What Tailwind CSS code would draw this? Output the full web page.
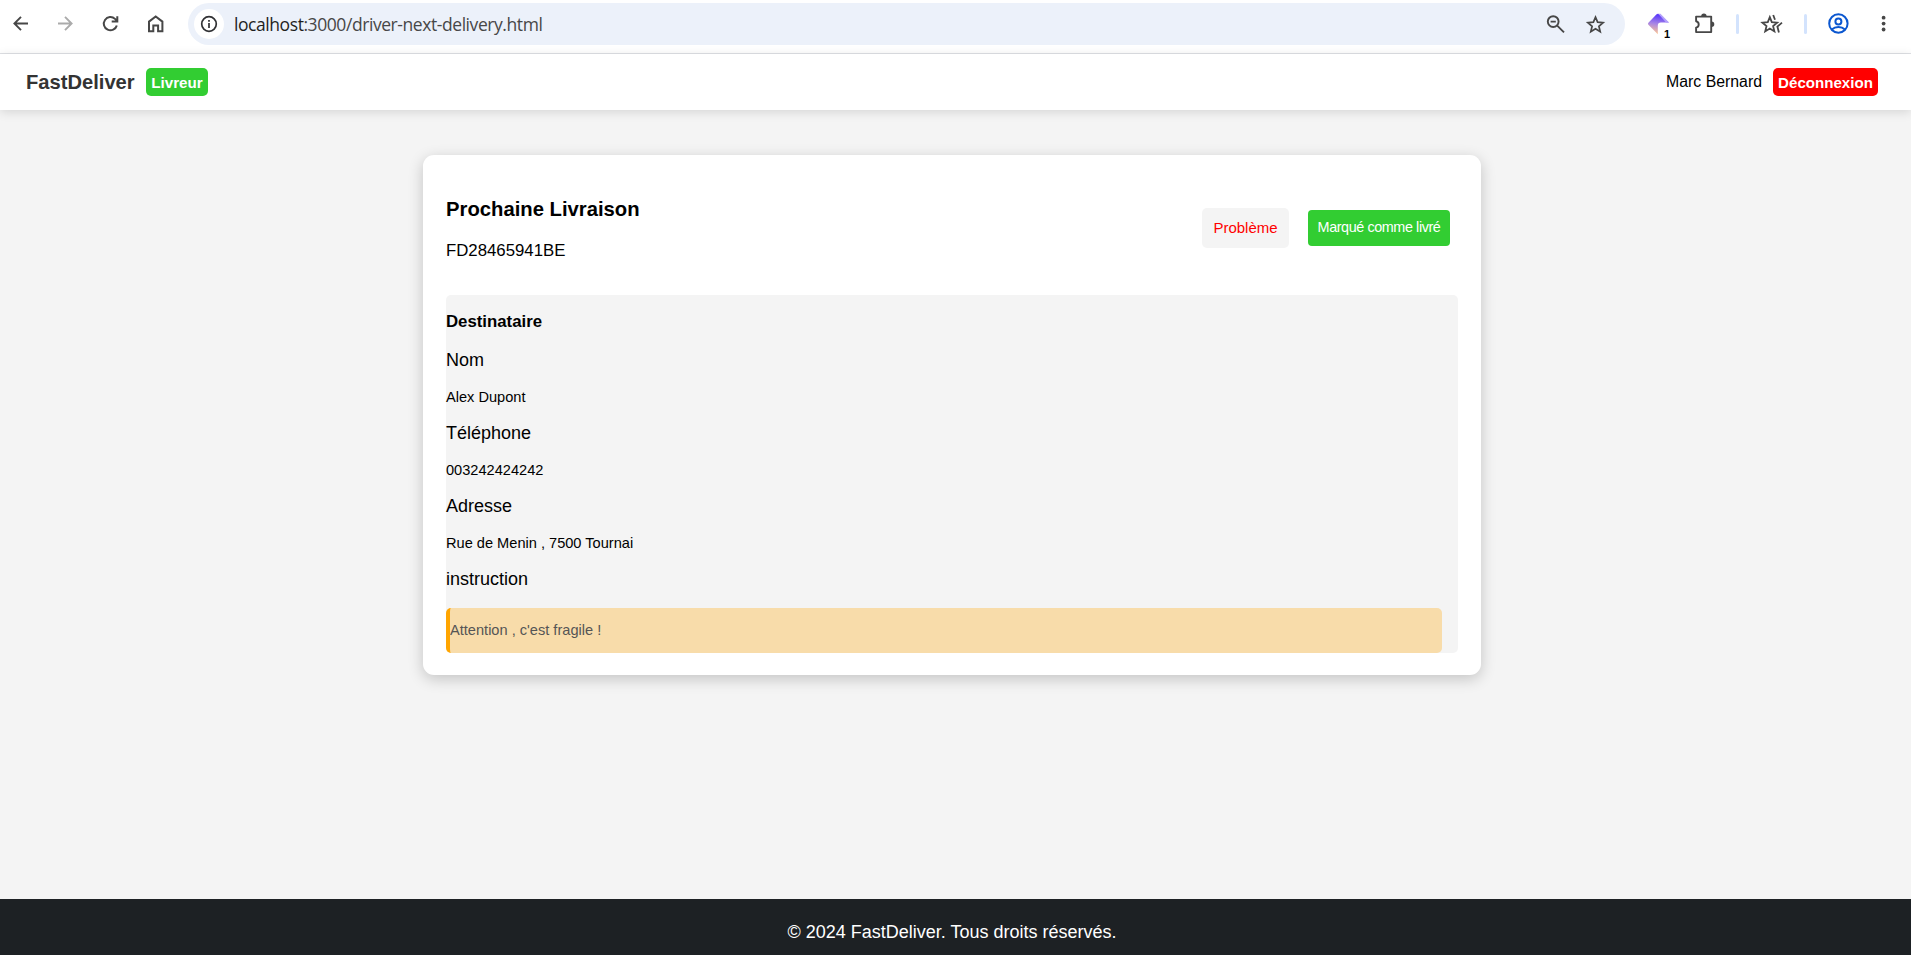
<!DOCTYPE html>
<html lang="fr">
<head>
    <meta charset="UTF-8">
    <meta name="viewport" content="width=device-width, initial-scale=1.0">
    <title>FastDeliver - Prochaine Livraison</title>
    <script src="https://cdn.jsdelivr.net/npm/@tailwindcss/browser@4"></script>
</head>
<body class="flex flex-col h-screen overflow-hidden bg-[#f4f4f4] text-black font-['Liberation_Sans',Arial,sans-serif]">

    <!-- Browser toolbar -->
    <div class="flex items-center shrink-0 h-[54px] pb-[5px] bg-white border-b border-[#dfe1e5] text-[#474747]">
        <svg class="ml-[10px] w-5 h-5 shrink-0" viewBox="0 0 20 20" fill="none" stroke="currentColor" stroke-width="1.9"><path d="M18 9.5H4.4M11 2.8L4.4 9.5l6.6 6.7"/></svg>
        <svg class="ml-6 w-5 h-5 shrink-0 text-[#ababab]" viewBox="0 0 20 20" fill="none" stroke="currentColor" stroke-width="1.9"><path d="M4 9.5h13.6M11 2.8l6.6 6.7-6.6 6.7"/></svg>
        <svg class="ml-[26px] w-5 h-5 shrink-0" viewBox="0 0 20 20" fill="none" stroke="currentColor" stroke-width="2"><path d="M16.8 11.4A6.6 6.6 0 1 1 15 4.9L17 6.9M17.3 2.2v5.4h-5.6"/></svg>
        <svg class="ml-[25px] w-5 h-5 shrink-0" viewBox="0 0 20 20" fill="none" stroke="currentColor" stroke-width="2"><path d="M4 7.6l6.7-5.2 6.7 5.2v9.7h-4.3v-5.9H8.3v5.9H4z"/></svg>

        <div class="flex items-center shrink-0 ml-[23px] w-[1437px] h-[42px] pl-1.5 pr-[19px] rounded-full bg-[#ecf1fa]">
            <span class="flex items-center justify-center w-[30px] h-[30px] rounded-full bg-white">
                <svg class="w-[18px] h-[18px]" viewBox="0 0 18 18" fill="none" stroke="#303134" stroke-width="1.7"><circle cx="9" cy="9" r="7.3"/><path d="M9 8v5M9 5v1.8"/></svg>
            </span>
            <span class="ml-[10px] text-[17.5px] tracking-[-0.43px] whitespace-nowrap text-[#474747] font-['Open_Sans',sans-serif]"><span class="text-[#1f1f1f]">localhost</span>:3000/driver-next-delivery.html</span>
            <svg class="ml-auto w-5 h-5" viewBox="0 0 20 20" fill="none" stroke="currentColor" stroke-width="1.9"><circle cx="7.2" cy="7.6" r="5.4"/><path d="M11.2 11.6l6.8 6.8M4.6 7.6h5.2"/></svg>
            <svg class="ml-[19px] w-[21px] h-5" viewBox="0 0 21 20" fill="none" stroke="currentColor" stroke-width="1.7"><path d="M10.5 3.2l2.1 5 5.5.5-4.2 3.6 1.3 5.3-4.7-2.9-4.7 2.9 1.3-5.3-4.2-3.6 5.5-.5z"/></svg>
        </div>

        <!-- Extension with badge -->
        <div class="relative shrink-0 ml-[21px] w-6 h-[26px]">
            <svg class="w-6 h-[26px]" viewBox="0 0 24 26">
                <defs>
                    <linearGradient id="ext" x1="0.6" y1="0" x2="0.45" y2="1">
                        <stop offset="0.1" stop-color="#5f3dfa"/>
                        <stop offset="0.5" stop-color="#a583e6"/>
                        <stop offset="1" stop-color="#ffc792"/>
                    </linearGradient>
                </defs>
                <path d="M12.3 2.8L23 11.6h-8q-3.2 0-3.2 3.2v8.4L2.4 13.8q-1-1 0-2l8.2-8.6q.8-.7 1.7-.4z" fill="url(#ext)"/>
                <path d="M12.3 2.8h2.2L23 11.6h-3z" fill="#b3a0fb"/>
            </svg>
            <span class="absolute left-[18px] top-[17px] text-[11px] leading-3 font-bold text-black">1</span>
        </div>
        <svg class="ml-6 w-[22px] h-[22px] shrink-0" viewBox="0 0 22 22" fill="none" stroke="currentColor" stroke-width="1.9" stroke-linejoin="round"><path d="M2.1 3.6h15.1v15.5H2.1v-4.5c1.8-.4 2.6-1.5 2.6-3.2s-.8-2.8-2.6-3.2z"/><path d="M7.2 3.2a2.7 2.7 0 0 1 5.4 0zM17.6 8.6a2.7 2.7 0 0 1 0 5.4z" fill="currentColor" stroke="none"/></svg>
        <span class="ml-5 w-[3px] h-5 shrink-0 rounded-full bg-[#d3e3fd]"></span>
        <svg class="ml-[21px] w-[23px] h-[22px] shrink-0" viewBox="0 0 23 22" fill="none" stroke="currentColor" stroke-width="1.8"><path d="M9.8 4.2l2 4.9 5.4.5-4.1 3.5 1.3 5.3-4.6-2.8-4.6 2.8 1.3-5.3-4.1-3.5 5.4-.5z"/><path d="M13.2 2l1.8 4.8M22 9.6l-4.6 4 1.5 5.8"/></svg>
        <span class="ml-[21px] w-[3px] h-5 shrink-0 rounded-full bg-[#d3e3fd]"></span>
        <svg class="ml-5 w-[23px] h-[22px] shrink-0" viewBox="0 0 23 22" fill="none" stroke="#0b57d0" stroke-width="2"><circle cx="11.4" cy="10.5" r="9.2"/><circle cx="11.4" cy="8.4" r="3"/><path d="M4.8 16.6c3.6-3.4 9.6-3.4 13.2 0"/></svg>
        <svg class="ml-[31px] w-[6px] h-5 shrink-0" viewBox="0 0 6 20" fill="currentColor"><circle cx="2.6" cy="3.7" r="1.9"/><circle cx="2.6" cy="9.6" r="1.9"/><circle cx="2.6" cy="15.5" r="1.9"/></svg>
    </div>

    <!-- Header -->
    <header class="relative flex items-center shrink-0 h-[56px] pl-[26px] pr-[33px] bg-white shadow-[0_2px_10px_rgba(0,0,0,0.13)]">
        <h1 class="w-[120px] text-[20.16px] leading-6 font-bold text-[#333]">FastDeliver</h1>
        <span class="w-[62px] h-7 rounded-[5px] bg-[#32cd32] text-center text-[15.2px] leading-[29px] font-bold text-white">Livreur</span>
        <span class="ml-auto text-[15.84px] leading-6">Marc Bernard</span>
        <button class="ml-[11px] w-[105px] h-7 rounded-[5px] bg-[#f00] text-[15.12px] leading-[29px] font-bold text-white">Déconnexion</button>
    </header>

    <!-- Delivery card -->
    <main class="grow pt-[45px] pl-[423px]">
        <section class="w-[1058px] h-[520px] rounded-[11px] bg-white px-[23px] pt-[42px] shadow-[0_4px_15px_rgba(0,0,0,0.2)]">
            <div class="flex items-start justify-between h-[98px]">
                <div>
                    <h2 class="text-[20.25px] leading-6 font-bold">Prochaine Livraison</h2>
                    <p class="mt-5 text-[16.8px] leading-5">FD28465941BE</p>
                </div>
                <div class="flex items-center gap-[19px] mt-[11px] mr-2">
                    <button class="w-[87px] h-10 rounded-[5px] bg-[#f4f4f4] text-[15px] text-[#f00]">Problème</button>
                    <button class="w-[142px] h-9 rounded-[4px] bg-[#32cd32] text-[14.4px] tracking-[-0.42px] whitespace-nowrap text-white">Marqué comme livré</button>
                </div>
            </div>

            <div class="h-[358px] pt-[17px] rounded-[5px] bg-[#f4f4f4] text-[14.6px] leading-5">
                <h3 class="text-[16.8px] leading-5 font-bold">Destinataire</h3>
                <p class="mt-[18px] text-[18px] leading-5">Nom</p>
                <p class="mt-[17px]">Alex Dupont</p>
                <p class="mt-4 text-[18px] leading-5">Téléphone</p>
                <p class="mt-[17px]">003242424242</p>
                <p class="mt-4 text-[18px] leading-5">Adresse</p>
                <p class="mt-[17px]">Rue de Menin , 7500 Tournai</p>
                <p class="mt-4 text-[18px] leading-5">instruction</p>
                <p class="mt-[19px] w-[996px] h-[45px] leading-[45px] rounded-[5px] border-l-4 border-[#ffa500] bg-[#f8dcaa] text-[#555]">Attention , c'est fragile !</p>
            </div>
        </section>
    </main>

    <footer class="shrink-0 h-[56px] pt-[23px] pr-[7px] bg-[#1d2124] text-center text-[18px] leading-5 text-white">© 2024 FastDeliver. Tous droits réservés.</footer>
</body>
</html>
